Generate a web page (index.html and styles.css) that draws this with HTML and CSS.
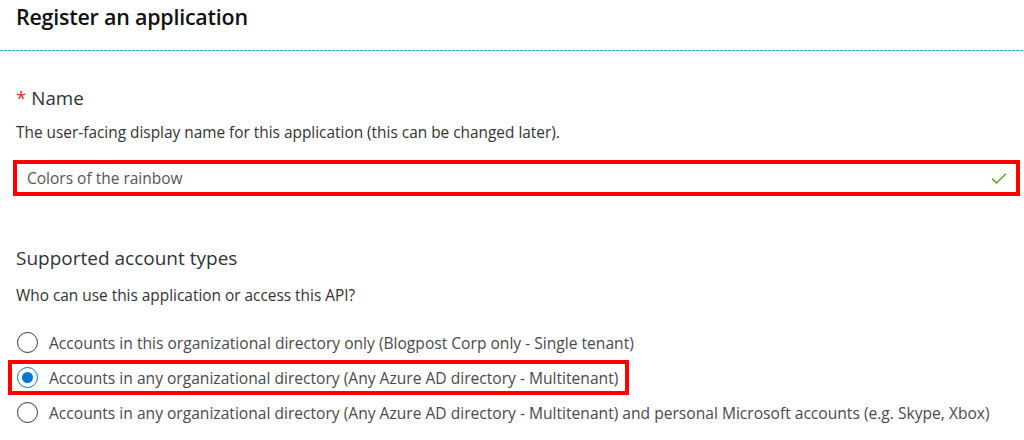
FILE: index.html
```html
<!DOCTYPE html>
<html lang="en">
<head>
<meta charset="utf-8">
<title>Register an application</title>
<link rel="stylesheet" href="styles.css">
</head>
<body>
<header class="blade-header">
  <h1 class="blade-title">Register an application</h1>
</header>
<main class="form">
  <section class="field">
    <h2 class="field-label"><span class="required">*</span> Name</h2>
    <p class="field-desc">The user-facing display name for this application (this can be changed later).</p>
    <div class="text-input highlight">
      <span class="input-value">Colors of the rainbow</span>
      <svg class="check" width="16" height="11" viewBox="0 0 16 11" aria-hidden="true"><path d="M1 5.5 L5.5 10 L15 0.8" fill="none" stroke="#5ca31c" stroke-width="1.4"/></svg>
    </div>
  </section>
  <section class="field accounts">
    <h2 class="section-label">Supported account types</h2>
    <p class="field-desc">Who can use this application or access this API?</p>
    <div class="radio-group">
      <label class="radio-row"><span class="radio"></span><span class="radio-text">Accounts in this organizational directory only (Blogpost Corp only - Single tenant)</span></label>
      <label class="radio-row highlight"><span class="radio checked"></span><span class="radio-text">Accounts in any organizational directory (Any Azure AD directory - Multitenant)</span></label>
      <label class="radio-row"><span class="radio"></span><span class="radio-text">Accounts in any organizational directory (Any Azure AD directory - Multitenant) and personal Microsoft accounts (e.g. Skype, Xbox)</span></label>
    </div>
  </section>
</main>
</body>
</html>
```

FILE: styles.css
```css
* { box-sizing: border-box; }
html, body { margin: 0; padding: 0; background: #fff; }
body {
  font-family: "Open Sans", "Noto Sans", sans-serif;
  color: #323130;
  width: 1024px;
  height: 440px;
  overflow: hidden;
}
.blade-header {
  height: 52px;
  padding: 3px 0 0 16px;
  background-image: repeating-linear-gradient(to right, #1fbcef 0 3px, transparent 3px 4px);
  background-size: 100% 1px;
  background-repeat: no-repeat;
  background-position: 0 50px;
}
.blade-title {
  margin: 0;
  font-size: 21.4px;
  font-weight: 600;
  color: #111;
  line-height: 28px;
  letter-spacing: -0.2px;
}
.form { padding: 0; }
.field { padding: 0 0 0 16px; }
.field-label {
  margin: 34px 0 0 0;
  font-size: 18.8px;
  font-weight: 400;
  line-height: 24px;
  color: #333;
}
.required { color: #e0301e; }
.field-desc {
  margin: 13px 0 0 0;
  font-size: 15.4px;
  line-height: 20px;
  color: #333;
}
.text-input {
  margin: 17px 0 0 -3px;
  width: 1007px;
  height: 36px;
  display: flex;
  align-items: center;
  padding: 0 5px 0 10px;
  border: 4px solid #f00;
}
.input-value {
  flex: 1;
  font-size: 15.5px;
  color: #555;
}
.check { display: block; margin-right: 4px; margin-top: 1px; }
.accounts { padding-left: 16px; }
.section-label {
  margin: 49px 0 0 0;
  font-size: 19px;
  font-weight: 400;
  line-height: 26px;
  color: #333;
}
.accounts .field-desc { margin-top: 15px; }
.radio-group {
  margin: 19px 0 0 -8px;
  display: flex;
  flex-direction: column;
  align-items: flex-start;
}
.radio-row {
  display: flex;
  align-items: center;
  height: 35px;
  padding: 0 7px 0 5px;
  border: 4px solid transparent;
}
.radio-row.highlight { border-color: #f00; }
.radio {
  width: 21px;
  height: 21px;
  border: 1px solid #333;
  border-radius: 50%;
  margin-right: 11px;
  position: relative;
  flex: none;
}
.radio.checked { border-color: #0078d4; }
.radio.checked::after {
  content: "";
  position: absolute;
  left: 4px; top: 4px;
  width: 11px; height: 11px;
  border-radius: 50%;
  background: #0078d4;
}
.radio-text {
  font-size: 15.6px;
  color: #4a4a4a;
  white-space: nowrap;
}
```
